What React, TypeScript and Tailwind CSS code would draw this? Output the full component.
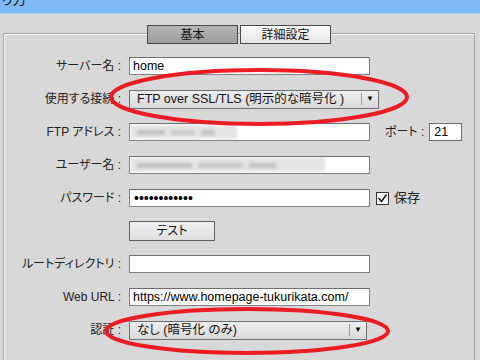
import React from 'react';

const font = { fontFamily: '"Liberation Sans", "Noto Sans CJK JP", sans-serif', fontFeatureSettings: '"palt"' };

const Label = ({ text }: { text: string }) => (
  <div className="w-[118px] shrink-0 pr-[1px] text-right text-[12px] text-[#222] whitespace-nowrap">
    {text} :
  </div>
);

const TextBox = ({ w = 'w-[241px]', children }: { w?: string; children?: React.ReactNode }) => (
  <div
    className={`${w} h-[18px] bg-white border border-[#828282] border-t-[#6e6e6e] flex items-center px-[3px] text-[12.5px] text-black overflow-hidden whitespace-nowrap`}
  >
    {children}
  </div>
);

const Select = ({ w, value }: { w: string; value: string }) => (
  <div
    className={`${w} h-[19px] border border-[#707070] bg-gradient-to-b from-[#efefef] to-[#d9d9d9] flex items-center text-[12.5px] text-[#111] whitespace-nowrap`}
  >
    <div className="flex-1 pl-[7px]">{value}</div>
    <div className="w-px h-[12px] bg-[#9a9a9a]" />
    <div className="w-[16px] flex justify-center text-[8px] leading-none">▼</div>
  </div>
);

const Blurred = ({ w }: { w: string }) => (
  <div className={`${w} h-[14px] -ml-[2px] bg-[#e4e4e4] blur-[1.5px] flex items-center gap-[6px] px-[6px]`}>
    <div className="h-[5px] w-[30%] bg-[#c2c2c2]" />
    <div className="h-[5px] w-[25%] bg-[#cacaca]" />
    <div className="h-[5px] w-[15%] bg-[#c4c4c4]" />
  </div>
);

export default function App() {
  return (
    <div className="relative w-[480px] h-[360px] overflow-hidden bg-[#d8d8d8]" style={font}>
      {/* title bar */}
      <div className="h-[14px] bg-[#7fbaf6] overflow-hidden border-b border-[#a9cdf2]">
        <div className="-mt-[8px] pl-[1px] text-[14px] text-[#1a1a1a] leading-none">り方</div>
      </div>

      {/* group box */}
      <div className="ml-[3px] mr-[5px] mt-[19px] h-[360px] border border-[#a6a6a6] border-b-0 shadow-[inset_1px_1px_0_#f4f4f4]">
        <div className="-mt-[9px] flex justify-center gap-[2px]">
          <div className="w-[91px] h-[19px] border border-[#4a4a4a] bg-gradient-to-b from-[#b4b4b4] to-[#9e9e9e] text-[12px] text-[#111] flex items-center justify-center">
            基本
          </div>
          <div className="w-[91px] h-[19px] border border-[#4a4a4a] bg-gradient-to-b from-[#fbfbfb] to-[#e4e4e4] text-[12px] text-[#111] flex items-center justify-center">
            詳細設定
          </div>
        </div>

        <div className="pt-[13px] flex flex-col gap-[15px]">
          <div className="flex items-center gap-[7px] h-[18px]">
            <Label text="サーバー名" />
            <TextBox>home</TextBox>
          </div>
          <div className="flex items-center gap-[7px] h-[18px]">
            <Label text="使用する接続" />
            <Select w="w-[250px]" value="FTP over SSL/TLS (明示的な暗号化 )" />
          </div>
          <div className="flex items-center gap-[7px] h-[18px]">
            <Label text="FTP アドレス" />
            <TextBox>
              <Blurred w="w-[106px]" />
            </TextBox>
            <div className="ml-[8px] text-[12px] text-[#222] whitespace-nowrap">ポート :</div>
            <div className="-ml-[2px] w-[33px] h-[18px] bg-white border border-[#6e6e6e] text-[12.5px] flex items-center px-[4px]">
              21
            </div>
          </div>
          <div className="flex items-center gap-[7px] h-[18px]">
            <Label text="ユーザー名" />
            <TextBox>
              <Blurred w="w-[194px]" />
            </TextBox>
          </div>
          <div className="flex items-center gap-[7px] h-[18px]">
            <Label text="パスワード" />
            <TextBox>
              <span className="text-[14px] leading-none pl-[1px]">••••••••••••</span>
            </TextBox>
            <div className="flex items-center gap-[5px] -ml-[1px]">
              <div className="w-[13px] h-[13px] bg-white border border-[#333] flex items-center justify-center">
                <svg width="11" height="11" viewBox="0 0 11 11">
                  <polyline points="1.5,5 4.5,8.5 9.5,1.5" fill="none" stroke="#111" strokeWidth="1.6" />
                </svg>
              </div>
              <span className="text-[13px] text-[#222]">保存</span>
            </div>
          </div>
          <div className="flex items-center gap-[7px] h-[18px]">
            <div className="w-[118px] shrink-0" />
            <div className="w-[86px] h-[20px] border border-[#606060] bg-gradient-to-b from-[#f2f2f2] to-[#dedede] text-[12px] text-[#111] flex items-center justify-center">
              テスト
            </div>
          </div>
          <div className="flex items-center gap-[7px] h-[18px]">
            <Label text="ルートディレクトリ" />
            <TextBox />
          </div>
          <div className="flex items-center gap-[7px] h-[18px]">
            <Label text="Web URL" />
            <TextBox>https://www.homepage-tukurikata.com/</TextBox>
          </div>
          <div className="flex items-center gap-[7px] h-[18px]">
            <Label text="認証" />
            <Select w="w-[238px]" value="なし (暗号化 のみ)" />
          </div>
        </div>
      </div>

      {/* red annotation circles */}
      <svg className="absolute inset-0 pointer-events-none" width="480" height="360">
        <ellipse cx="259" cy="97" rx="148" ry="27" fill="none" stroke="#ec1c24" strokeWidth="4" />
        <ellipse cx="247" cy="331" rx="141" ry="22" fill="none" stroke="#ec1c24" strokeWidth="4" />
      </svg>
    </div>
  );
}
